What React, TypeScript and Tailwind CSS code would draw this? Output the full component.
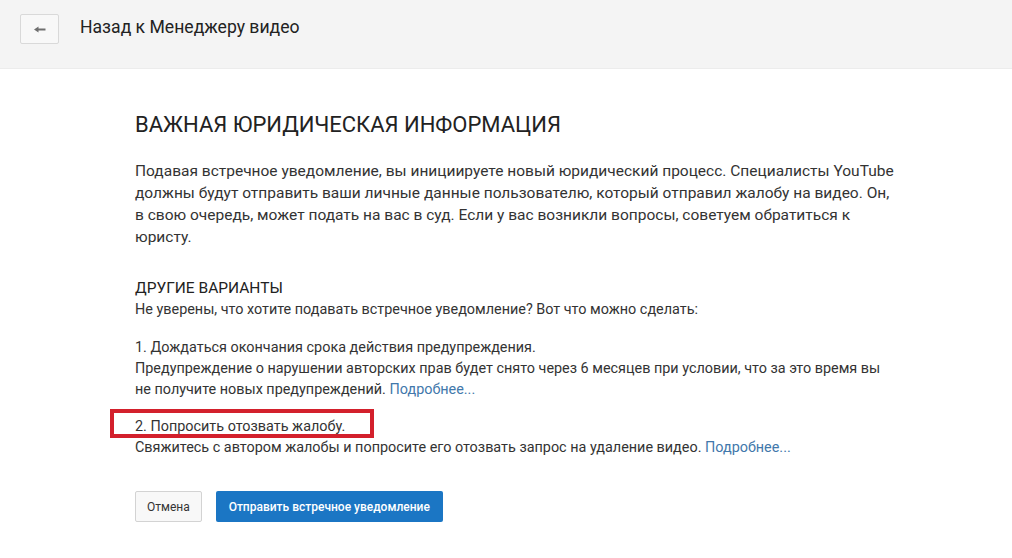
import React from "react";

export default function App() {
  const font = { fontFamily: "Roboto, 'Noto Sans', Arial, sans-serif" };
  return (
    <div className="w-[1012px] h-[558px] bg-white text-[#222] overflow-hidden" style={font}>
      <header className="h-[69px] bg-[#f4f4f4] border-b border-[#ececec] flex items-start pt-[14px] pl-[20px]">
        <button className="w-[39px] h-[30px] bg-[#f8f8f8] border border-[#d9d9d9] rounded-[2px] flex items-center justify-center">
          <svg width="12" height="7" viewBox="0 0 12 7">
            <path d="M0 3.5 L4.5 0.5 V2.5 H11.5 V4.5 H4.5 V6.5 Z" fill="#6f6f6f" />
          </svg>
        </button>
        <div className="ml-[21px] text-[17.6px] leading-[28px] text-[#222] -mt-[1px]">Назад к Менеджеру видео</div>
      </header>

      <main className="pl-[135px] pt-[42px]">
        <h1 className="text-[22px] leading-[28px] text-[#222] font-normal">ВАЖНАЯ ЮРИДИЧЕСКАЯ ИНФОРМАЦИЯ</h1>

        <p className="mt-[21px] text-[15.5px] leading-[22px] text-[#333] whitespace-nowrap">
          Подавая встречное уведомление, вы инициируете новый юридический процесс. Специалисты YouTube
          <br />
          должны будут отправить ваши личные данные пользователю, который отправил жалобу на видео. Он,
          <br />
          в свою очередь, может подать на вас в суд. Если у вас возникли вопросы, советуем обратиться к
          <br />
          юристу.
        </p>

        <div className="mt-[29px] text-[15.5px] leading-[22px] text-[#222]">ДРУГИЕ ВАРИАНТЫ</div>
        <p className="text-[14.4px] leading-[21px] text-[#333] whitespace-nowrap">
          Не уверены, что хотите подавать встречное уведомление? Вот что можно сделать:
        </p>

        <div className="mt-[17px] text-[14.4px] leading-[21px] text-[#333] whitespace-nowrap">
          <div>1. Дождаться окончания срока действия предупреждения.</div>
          <div>Предупреждение о нарушении авторских прав будет снято через 6 месяцев при условии, что за это время вы</div>
          <div>
            не получите новых предупреждений. <a className="text-[#4278ab]">Подробнее...</a>
          </div>
        </div>

        <div className="mt-[16px] text-[14.4px] leading-[21px] text-[#333] whitespace-nowrap">
          <div className="relative">
            2. Попросить отозвать жалобу.
            <div className="absolute left-[-25px] top-[-7px] w-[264px] h-[29px] border-4 border-[#d3202c] pointer-events-none" />
          </div>
          <div>
            Свяжитесь с автором жалобы и попросите его отозвать запрос на удаление видео.{" "}
            <a className="text-[#4278ab]">Подробнее...</a>
          </div>
        </div>

        <div className="mt-[33px] flex gap-[14px]">
          <button className="h-[31px] px-[11px] bg-[#f8f8f8] border border-[#d3d3d3] rounded-[2px] text-[12px] text-[#333]">
            Отмена
          </button>
          <button className="h-[31px] w-[227px] bg-[#1b76c4] rounded-[2px] text-[12px] font-medium text-white">
            Отправить встречное уведомление
          </button>
        </div>
      </main>
    </div>
  );
}
